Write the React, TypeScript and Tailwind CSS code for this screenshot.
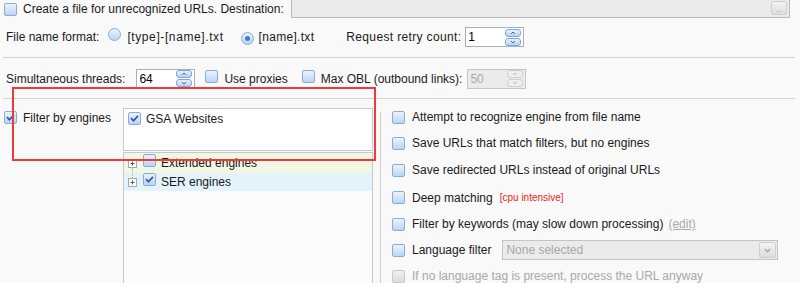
import React from "react";

const font = { fontFamily: '"Liberation Sans", Arial, sans-serif' };

const Check = ({ checked = false, disabled = false }: { checked?: boolean; disabled?: boolean }) => (
  <span
    className={`relative inline-block w-[13px] h-[13px] shrink-0 rounded-[2px] border ${
      disabled
        ? "border-[#c8c8c8] bg-gradient-to-b from-[#f0f0f0] to-[#dcdcdc]"
        : "border-[#86acd8] bg-gradient-to-b from-[#eaf3fc] to-[#bcd5f0]"
    }`}
  >
    {checked && (
      <svg viewBox="0 0 13 13" className="absolute -left-px -top-px w-[13px] h-[13px]">
        <path d="M3 6.2 L5.5 8.8 L10 3.8" fill="none" stroke="#2a5db0" strokeWidth="1.8" />
      </svg>
    )}
  </span>
);

const Radio = ({ checked = false }: { checked?: boolean }) => (
  <span className="relative inline-flex items-center justify-center w-[13px] h-[13px] shrink-0 rounded-full border border-[#86acd8] bg-gradient-to-b from-[#eaf3fc] to-[#bcd5f0]">
    {checked && <span className="w-[5px] h-[5px] rounded-full bg-[#3b7bd4]" />}
  </span>
);

const Spin = ({ value, disabled = false }: { value: string; disabled?: boolean }) => (
  <div
    className={`flex items-center w-[59px] h-[20px] border ${
      disabled ? "border-[#c4c4c4] bg-[#ebebeb] text-[#a8a8a8]" : "border-[#a9b0b8] bg-white text-black"
    }`}
  >
    <span className="flex-1 pl-[2px] leading-none">{value}</span>
    <div className="flex flex-col gap-px mr-[2px]">
      {["M2 6 L5 3 L8 6", "M2 3 L5 6 L8 3"].map((d) => (
        <span
          key={d}
          className={`flex items-center justify-center w-[16px] h-[8px] rounded-[3px] border ${
            disabled ? "border-[#cfcfcf] bg-[#eeeeee]" : "border-[#7fa8da] bg-gradient-to-b from-[#e6f1fc] to-[#b9d3f0]"
          }`}
        >
          <svg viewBox="0 0 10 9" className="w-[8px] h-[6px]">
            <path d={d} fill="none" stroke={disabled ? "#b8b8b8" : "#2f62b0"} strokeWidth="1.4" />
          </svg>
        </span>
      ))}
    </div>
  </div>
);

const PlusBox = () => (
  <span className="flex items-center justify-center w-[9px] h-[9px] border border-[#a8a8a8] bg-white text-[#555]">
    <svg viewBox="0 0 7 7" className="w-[7px] h-[7px]">
      <path d="M1.5 3.5 H5.5 M3.5 1.5 V5.5" stroke="#606060" strokeWidth="1" />
    </svg>
  </span>
);

const options = [
  { label: "Attempt to recognize engine from file name", h: "h-[26px]" },
  { label: "Save URLs that match filters, but no engines", h: "h-[26px]" },
  { label: "Save redirected URLs instead of original URLs", h: "h-[28px]" },
];

export default function App() {
  return (
    <div className="relative w-[800px] h-[283px] overflow-hidden bg-[#f9f9f9] text-[12px] text-[#1a1a1a]" style={font}>
      {/* top row */}
      <div className="flex items-center h-[18px] pl-[4px] pr-[10px]">
        <Check />
        <span className="ml-[6px]">Create a file for unrecognized URLs. Destination:</span>
        <div className="ml-auto flex items-center justify-end w-[499px] h-[18px] -mt-[1px] border border-[#b8b8b8] border-t-0 bg-[#ebebeb] pr-[2px]">
          <span className="flex items-end justify-center w-[16px] h-[14px] rounded-[2px] border border-[#cdcdcd] bg-gradient-to-b from-[#f2f2f2] to-[#dedede] text-[8px] leading-[8px] text-[#999]">
            ...
          </span>
        </div>
      </div>

      {/* file name format */}
      <div className="flex items-center h-[20px] mt-[9px] pl-[6px]">
        <span>File name format:</span>
        <span className="ml-[9px]"><Radio /></span>
        <span className="ml-[6px] tracking-[0.6px]">[type]-[name].txt</span>
        <span className="ml-[17px]"><Radio checked /></span>
        <span className="ml-[5px] tracking-[0.3px]">[name].txt</span>
        <span className="ml-[32px] tracking-[0.35px]">Request retry count:</span>
        <span className="ml-[4px]"><Spin value="1" /></span>
      </div>

      <div className="mx-[3px] mt-[10px] mr-[5px] h-px bg-[#d4d4d4]" />

      {/* threads */}
      <div className="flex items-center h-[21px] mt-[10px] pl-[6px]">
        <span>Simultaneous threads:</span>
        <span className="ml-[11px]"><Spin value="64" /></span>
        <span className="ml-[10px]"><Check /></span>
        <span className="ml-[6px]">Use proxies</span>
        <span className="ml-[14px]"><Check /></span>
        <span className="ml-[6px]">Max OBL (outbound links):</span>
        <span className="ml-[5px]"><Spin value="50" disabled /></span>
      </div>

      <div className="mx-[3px] mt-[9px] mr-[5px] h-px bg-[#d4d4d4]" />

      {/* engines section */}
      <div className="flex">
        <div className="flex items-start w-[123px] pt-[12px] pl-[4px]">
          <Check checked />
          <span className="ml-[6px] -mt-[2px]">Filter by engines</span>
        </div>

        <div className="flex flex-col w-[250px] pt-[9px]">
          <div className="h-[43px] border border-[#c8c8c8] bg-white pl-[4px] pt-[3px]">
            <div className="flex items-center h-[13px]">
              <Check checked />
              <span className="ml-[5px]">GSA Websites</span>
            </div>
          </div>
          <div className="mt-px h-[140px] border-x border-t border-[#c8c8c8] bg-[#fbfbfb]">
            <div className="relative flex items-center h-[20px] bg-[#f1f7e3] pl-[4px]">
              <PlusBox />
              <span className="absolute left-[8px] top-[15px] h-[10px] border-l border-dotted border-[#b0b0b0]" />
              <span className="ml-[6px]"><Check /></span>
              <span className="ml-[5px]">Extended engines</span>
            </div>
            <div className="flex items-center h-[18px] bg-[#e3f2fb] pl-[4px]">
              <PlusBox />
              <span className="ml-[6px]"><Check checked /></span>
              <span className="ml-[5px]">SER engines</span>
            </div>
          </div>
        </div>

        <div className="ml-[7px] mt-[13px] w-px h-[180px] bg-[#d0d0d0]" />

        <div className="flex flex-col pl-[11px] pt-[5px] flex-1">
          {options.map((o) => (
            <div key={o.label} className={`flex items-center ${o.h}`}>
              <Check />
              <span className="ml-[7px]">{o.label}</span>
            </div>
          ))}
          <div className="flex items-center h-[27px]">
            <Check />
            <span className="ml-[7px]">Deep matching</span>
            <span className="ml-[7px] text-[10px] text-[#ee1c1c]">[cpu intensive]</span>
          </div>
          <div className="flex items-center h-[26px]">
            <Check />
            <span className="ml-[7px]">Filter by keywords (may slow down processing)</span>
            <span className="ml-[5px] text-[#a8a8a8] underline">(edit)</span>
          </div>
          <div className="flex items-center h-[26px]">
            <Check />
            <span className="ml-[7px]">Language filter</span>
            <div className="ml-[11px] flex items-center w-[276px] h-[20px] border border-[#c4c4c4] bg-[#ebebeb] text-[#a8a8a8]">
              <span className="flex-1 pl-[3px]">None selected</span>
              <span className="flex items-center justify-center w-[17px] h-[16px] mr-px rounded-[2px] border border-[#cfcfcf] bg-gradient-to-b from-[#f3f3f3] to-[#dcdcdc]">
                <svg viewBox="0 0 9 6" className="w-[7px] h-[5px]">
                  <path d="M1 1 L4.5 4.5 L8 1" fill="none" stroke="#a0a0a0" strokeWidth="1.6" />
                </svg>
              </span>
            </div>
          </div>
          <div className="flex items-center h-[26px] text-[#a8a8a8]">
            <Check disabled />
            <span className="ml-[7px]">If no language tag is present, process the URL anyway</span>
          </div>
        </div>
      </div>

      {/* highlight marker */}
      <div className="absolute left-[12px] top-[87px] w-[364px] h-[74px] border-2 border-[#ee3a3a] pointer-events-none" />
    </div>
  );
}
